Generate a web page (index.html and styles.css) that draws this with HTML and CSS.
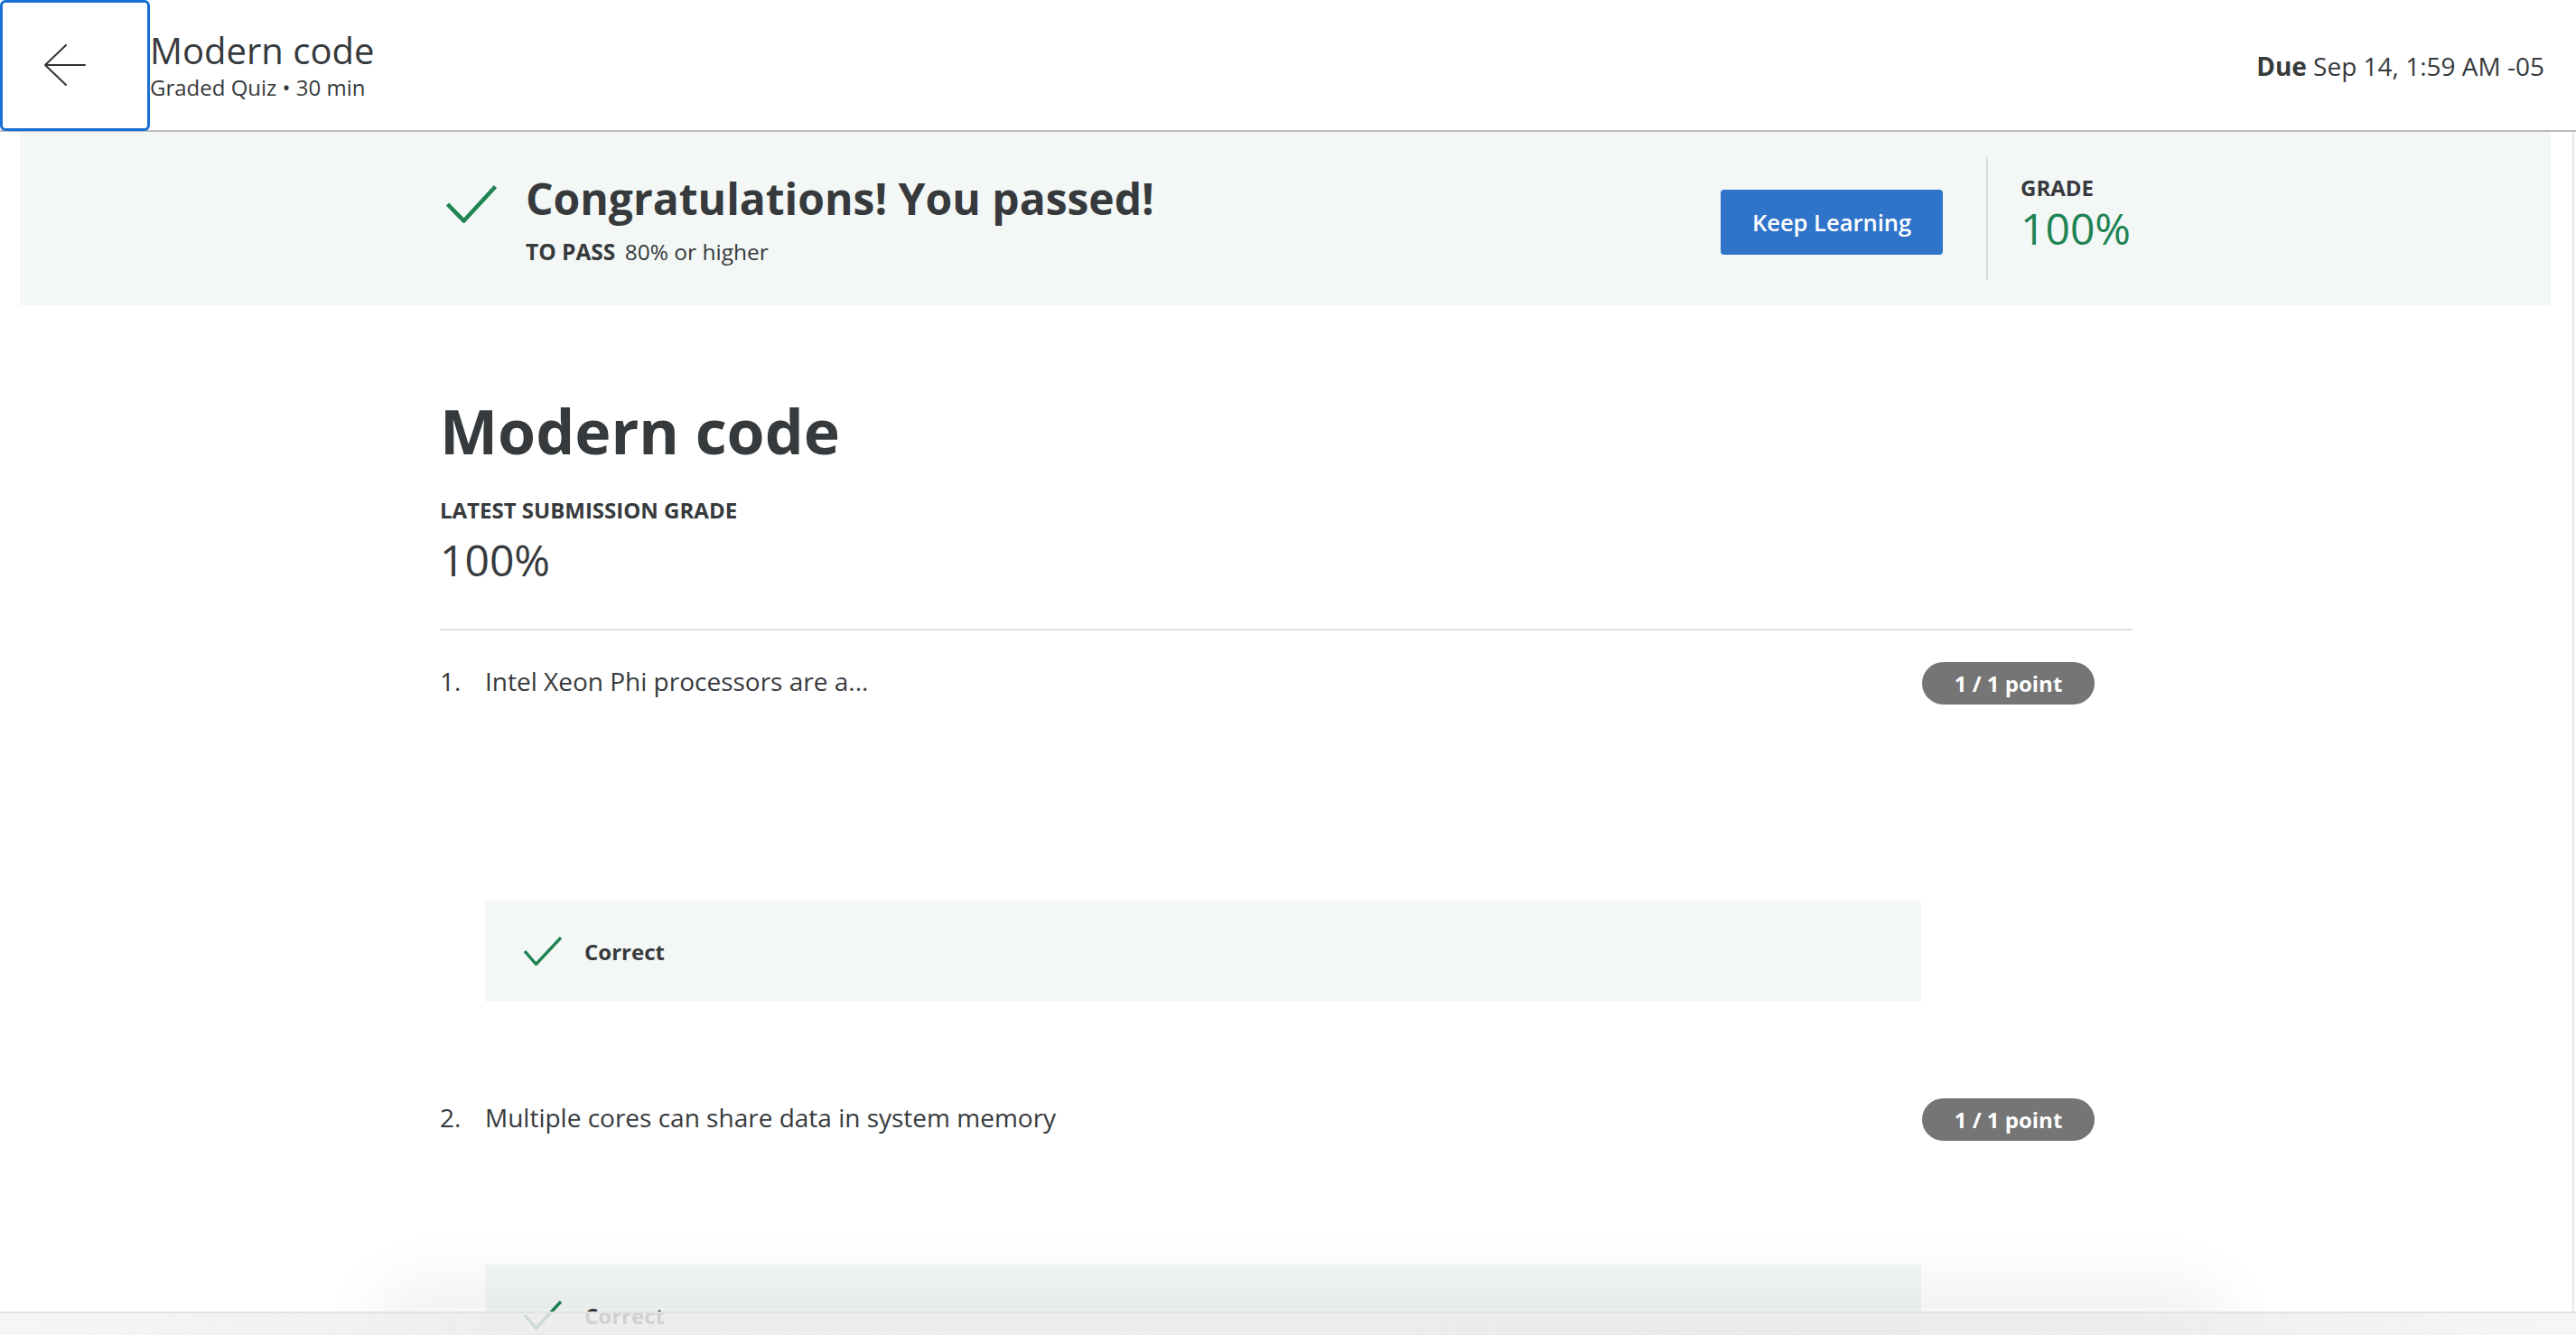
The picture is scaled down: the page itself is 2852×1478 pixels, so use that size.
FILE: index.html
```html
<!DOCTYPE html>
<html lang="en">
<head>
<meta charset="utf-8">
<title>Modern code</title>
<link rel="stylesheet" href="styles.css">
</head>
<body>
<header class="topbar">
  <button class="back" aria-label="Back">
    <svg width="48" height="48" viewBox="0 0 48 48" fill="none" stroke="#333" stroke-width="2" stroke-linecap="round" stroke-linejoin="round">
      <path d="M2 23 L46 23 M25 1 L2 23 L25 45"/>
    </svg>
  </button>
  <div class="titles">
    <div class="title">Modern code</div>
    <div class="subtitle">Graded Quiz • 30 min</div>
  </div>
  <div class="due"><b>Due</b> Sep 14, 1:59 AM -05</div>
</header>
<div class="body">
  <main class="main">
    <section class="banner">
      <div class="banner-inner">
        <svg class="big-check" width="56" height="42" viewBox="0 0 56 42" fill="none" stroke="#1f8354" stroke-width="4.5">
          <path d="M1.5 21 L19.5 39.5 L54.5 1.5"/>
        </svg>
        <div class="banner-text">
          <h2 class="congrats">Congratulations! You passed!</h2>
          <div class="topass"><b>TO PASS</b> 80% or higher</div>
        </div>
        <button class="keep">Keep Learning</button>
        <div class="vdiv"></div>
        <div class="grade">
          <div class="grade-label">GRADE</div>
          <div class="grade-value">100%</div>
        </div>
      </div>
    </section>
    <section class="content">
      <h1 class="heading">Modern code</h1>
      <div class="latest-label">LATEST SUBMISSION GRADE</div>
      <div class="latest-value">100%</div>
      <hr class="sep">
      <div class="question q1">
        <div class="qrow">
          <span class="qnum">1.</span>
          <span class="qtext">Intel Xeon Phi processors are a...</span>
          <span class="badge">1 / 1 point</span>
        </div>
        <div class="correct first">
          <svg width="42" height="32" viewBox="0 0 42 32" fill="none" stroke="#1f8354" stroke-width="3.4">
            <path d="M1 16 L13.5 30.5 L41 1"/>
          </svg>
          <span>Correct</span>
        </div>
      </div>
      <div class="question q2">
        <div class="qrow">
          <span class="qnum">2.</span>
          <span class="qtext">Multiple cores can share data in system memory</span>
          <span class="badge">1 / 1 point</span>
        </div>
        <div class="correct second">
          <svg width="42" height="32" viewBox="0 0 42 32" fill="none" stroke="#1f8354" stroke-width="3.4">
            <path d="M1 16 L13.5 30.5 L41 1"/>
          </svg>
          <span>Correct</span>
        </div>
      </div>
    </section>
  </main>
  <div class="scrolltrack"></div>
</div>
<div class="footer-shadow"></div>
<div class="footer"></div>
</body>
</html>
```
FILE: styles.css
```css
* { box-sizing: border-box; }
html, body {
  margin: 0;
  padding: 0;
  height: 1478px;
  overflow: hidden;
  background: #fff;
  font-family: "Open Sans", "Noto Sans", "Liberation Sans", sans-serif;
  color: #373a3c;
}
.topbar {
  display: flex;
  align-items: center;
  height: 146px;
  border-bottom: 2px solid #bdbdbd;
  padding-right: 35px;
}
.back {
  width: 166px;
  height: 145px;
  align-self: flex-start;
  border: 3px solid #1a6fd6;
  border-radius: 6px;
  background: #fff;
  display: flex;
  align-items: center;
  justify-content: flex-start;
  padding: 0 0 0 45px;
  flex: none;
}
.titles {
  display: flex;
  flex-direction: column;
}
.title {
  font-size: 40px;
  line-height: 48px;
  font-weight: 400;
}
.subtitle {
  font-size: 24px;
  line-height: 30px;
  margin-top: 2px;
}
.due {
  margin-left: auto;
  font-size: 28px;
  line-height: 36px;
  margin-top: 2px;
}
.due b { font-weight: 700; }
.body {
  display: flex;
  height: 1332px;
}
.main {
  flex: 1;
  min-width: 0;
}
.scrolltrack {
  width: 4px;
  border-left: 2px solid #e6e6e6;
  flex: none;
}
.banner {
  margin: 0 24px 0 22px;
  height: 192px;
  background: #f3f8f6;
  display: flex;
  justify-content: center;
}
.banner-inner {
  width: 1874px;
  display: flex;
  align-items: flex-start;
  padding-left: 8px;
}
.big-check { flex: none; margin-top: 59px; }
.banner-text {
  margin-left: 32px;
  display: flex;
  flex-direction: column;
  margin-top: 45px;
}
.congrats {
  margin: 0;
  font-size: 48px;
  line-height: 58px;
  font-weight: 700;
}
.topass {
  font-size: 24.5px;
  line-height: 32px;
  margin-top: 14px;
}
.topass b { font-weight: 700; margin-right: 4px; }
.keep {
  margin-left: auto;
  margin-top: 64px;
  width: 246px;
  height: 72px;
  background: #3074ca;
  color: #fff;
  border: none;
  border-radius: 4px;
  font-family: inherit;
  font-size: 25.5px;
  font-weight: 600;
}
.vdiv {
  width: 2px;
  height: 136px;
  background: #dcdcdc;
  margin: 28px 36px 0 48px;
}
.grade {
  width: 123px;
  display: flex;
  flex-direction: column;
  margin-top: 47px;
}
.grade-label {
  font-size: 24px;
  line-height: 30px;
  font-weight: 700;
}
.grade-value {
  font-size: 48px;
  line-height: 54px;
  margin-top: 3px;
  color: #1f8354;
}
.content {
  width: 1874px;
  margin: 0 auto;
  padding-top: 98px;
}
.heading {
  margin: 0;
  font-size: 68px;
  line-height: 82px;
  font-weight: 700;
}
.latest-label {
  margin-top: 32px;
  font-size: 24px;
  line-height: 30px;
  font-weight: 700;
}
.latest-value {
  margin-top: 11px;
  font-size: 48px;
  line-height: 58px;
}
.sep {
  margin: 47px 0 0 0;
  border: none;
  height: 2px;
  background: #e0e0e0;
}
.question.q1 { margin-top: 35px; }
.question.q2 { margin-top: 107px; }
.qrow {
  display: flex;
  align-items: flex-start;
  padding-right: 42px;
}
.qnum {
  width: 50px;
  flex: none;
  font-size: 28px;
  line-height: 38px;
  margin-top: 2px;
}
.qtext {
  flex: 1;
  font-size: 28px;
  line-height: 38px;
  margin-top: 2px;
}
.badge {
  flex: none;
  width: 191px;
  height: 47px;
  border-radius: 24px;
  background: #757575;
  color: #fff;
  font-size: 24px;
  font-weight: 700;
  display: flex;
  align-items: center;
  justify-content: center;
}
.correct {
  margin-left: 50px;
  width: 1590px;
  height: 112px;
  background: #f3f8f6;
  display: flex;
  align-items: center;
  padding-left: 43px;
  font-size: 24px;
  font-weight: 700;
}
.correct svg { flex: none; margin-right: 25px; }
.correct.first { margin-top: 217px; }
.correct.second { margin-top: 137px; }
.footer-shadow {
  position: fixed;
  left: 440px;
  width: 2000px;
  bottom: -30px;
  height: 60px;
  border-radius: 40px;
  box-shadow: 0 0 70px 30px rgba(0, 0, 0, 0.06);
  background: rgba(0, 0, 0, 0.03);
}
.footer {
  position: fixed;
  left: 0;
  right: 0;
  bottom: 0;
  height: 26px;
  border-top: 2px solid #e2e2e2;
  background: linear-gradient(to right, rgba(245,245,245,0.9), rgba(236,236,236,0.85) 20%, rgba(234,234,234,0.85) 80%, rgba(245,245,245,0.9));
}
```
